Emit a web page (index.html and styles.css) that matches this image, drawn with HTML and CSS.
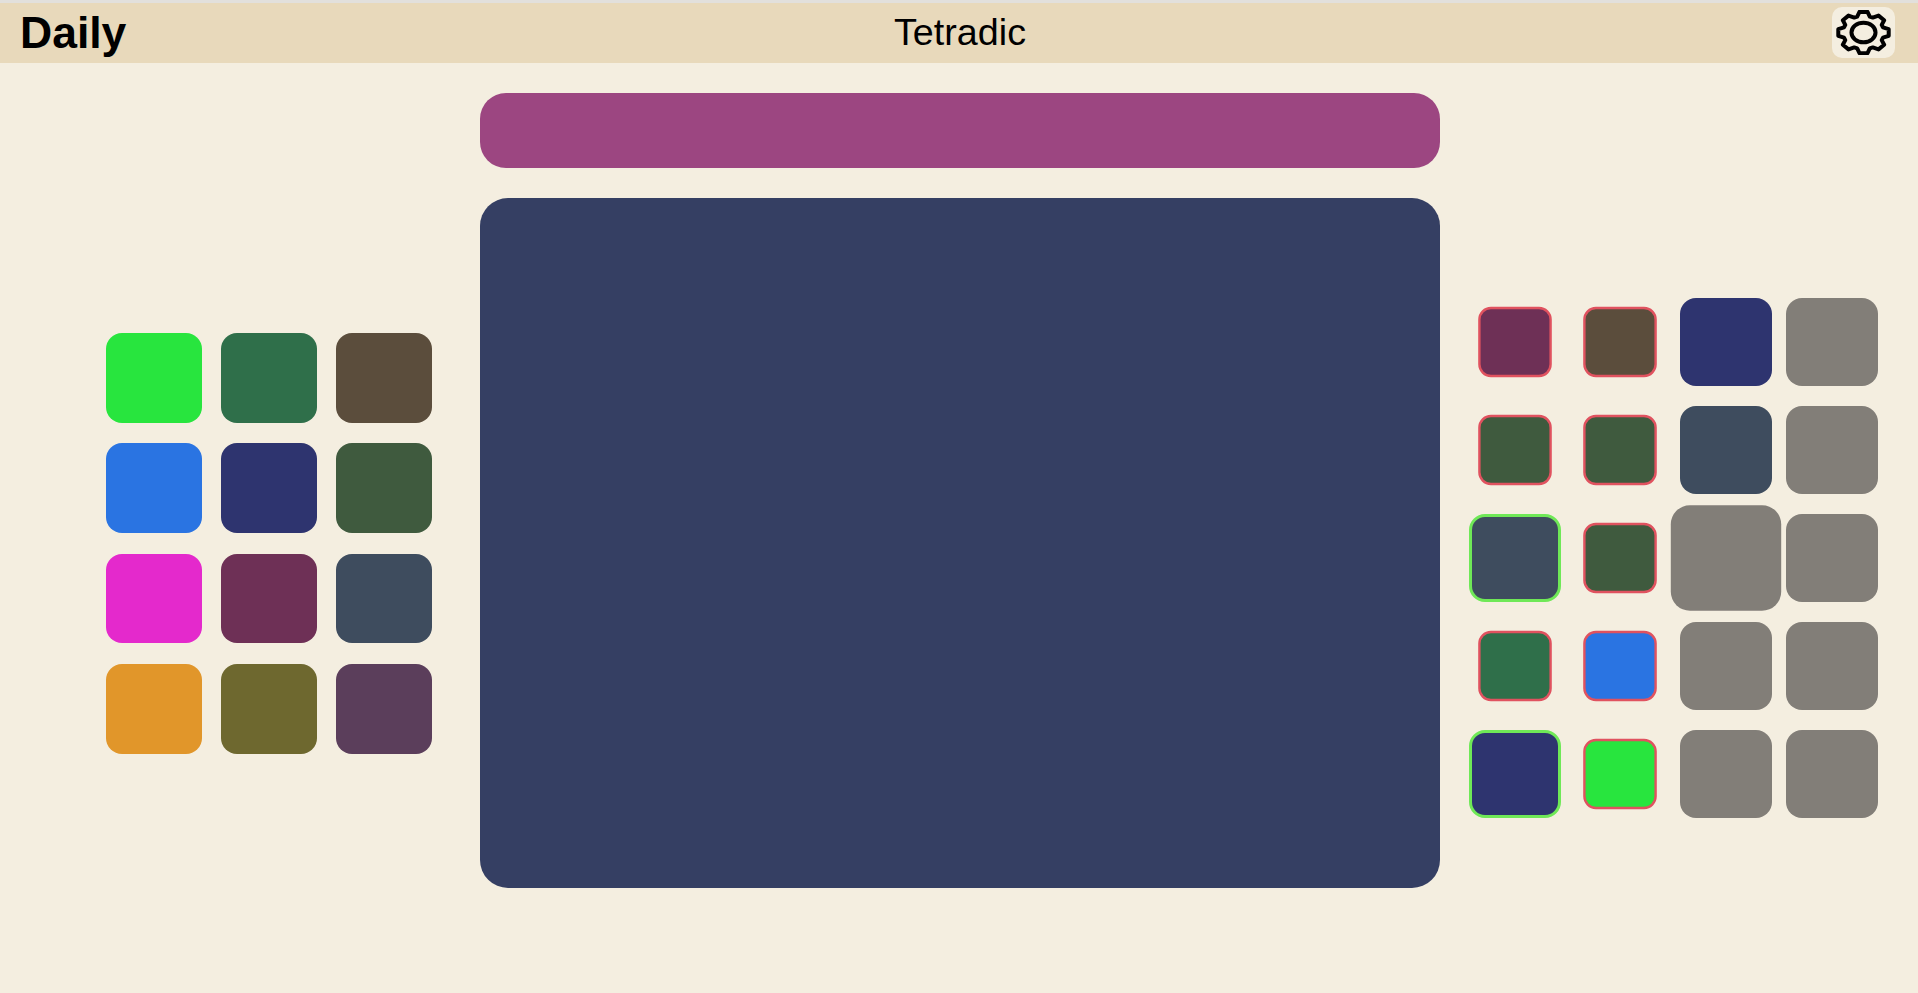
FILE: index.html
```html
<!DOCTYPE html>
<html lang="en">
<head>
<meta charset="utf-8">
<title>Daily - Tetradic</title>
<link rel="stylesheet" href="styles.css">
</head>
<body>
<header class="topbar">
  <h1 class="brand">Daily</h1>
  <div class="mode">Tetradic</div>
  <button class="gear" aria-label="Settings">
    <svg class="gear-icon" viewBox="0 0 48 48" preserveAspectRatio="none">
      <path vector-effect="non-scaling-stroke" d="M18.5 7L20.5 2H27.5L29.5 7L32.13 8.09L37.08 5.97L42.03 10.92L39.91 15.87L41 18.5L46 20.5V27.5L41 29.5L39.91 32.13L42.03 37.08L37.08 42.03L32.13 39.91L29.5 41L27.5 46H20.5L18.5 41L15.87 39.91L10.92 42.03L5.97 37.08L8.09 32.13L7 29.5L2 27.5V20.5L7 18.5L8.09 15.87L5.97 10.92L10.92 5.97L15.87 8.09Z"/>
      <circle vector-effect="non-scaling-stroke" cx="24" cy="24" r="10.5"/>
    </svg>
  </button>
</header>
<main class="stage">
  <section class="palette">
    <div class="sw c-green"></div><div class="sw c-forest2"></div><div class="sw c-brown"></div>
    <div class="sw c-blue"></div><div class="sw c-navy"></div><div class="sw c-forest"></div>
    <div class="sw c-magenta"></div><div class="sw c-plum"></div><div class="sw c-slate"></div>
    <div class="sw c-orange"></div><div class="sw c-olive"></div><div class="sw c-mauve"></div>
  </section>
  <section class="center">
    <div class="target"></div>
    <div class="canvas"></div>
  </section>
  <section class="board">
    <div class="cell c-plum wrong"></div><div class="cell c-brown wrong"></div><div class="cell c-navy"></div><div class="cell c-gray"></div>
    <div class="cell c-forest wrong"></div><div class="cell c-forest wrong"></div><div class="cell c-slate"></div><div class="cell c-gray"></div>
    <div class="cell c-slate right"></div><div class="cell c-forest wrong"></div><div class="cell c-gray active"></div><div class="cell c-gray"></div>
    <div class="cell c-forest2 wrong"></div><div class="cell c-blue wrong"></div><div class="cell c-gray"></div><div class="cell c-gray"></div>
    <div class="cell c-navy right"></div><div class="cell c-green wrong"></div><div class="cell c-gray"></div><div class="cell c-gray"></div>
  </section>
</main>
</body>
</html>
```
FILE: styles.css
```css
* { box-sizing: border-box; }
html { background: #f4eee0; }
body {
  margin: 0;
  font-family: "Liberation Sans", Arial, sans-serif;
  color: #000;
}
.topbar {
  height: 63px;
  border-top: 3px solid #e2e0dc;
  background: #e8d9bb;
  display: grid;
  grid-template-columns: 1fr auto 1fr;
  align-items: center;
  padding: 0 20px;
}
.brand { margin: 0; font-size: 44.5px; line-height: 1; font-weight: 700; }
.mode { font-size: 37.7px; line-height: 1; padding-left: 2px; }
.gear {
  justify-self: end;
  width: 63px;
  height: 51px;
  margin: -1px 3px 0 0;
  padding: 0;
  border: 0;
  border-radius: 10px;
  background: #f4eee0;
  display: flex;
  align-items: center;
  justify-content: center;
}
.gear-icon {
  display: block;
  width: 55px;
  height: 45px;
  fill: none;
  stroke: #000;
  stroke-width: 4px;
  stroke-linejoin: round;
}
.stage {
  display: grid;
  grid-template-columns: 480px 960px 478px;
  height: 930px;
}
.palette {
  display: grid;
  grid-template-columns: repeat(3, 96px);
  grid-auto-rows: 89.6px;
  gap: 20.8px 19px;
  padding: 270px 0 0 106px;
}
.center {
  display: flex;
  flex-direction: column;
  gap: 30px;
  padding-top: 30px;
}
.target { height: 75px; border-radius: 26px; background: #9c4681; }
.canvas { height: 690px; border-radius: 28px; background: #353f63; }
.sw, .cell { border-radius: 16px; }
.board {
  display: grid;
  grid-template-columns: repeat(4, 92px);
  grid-auto-rows: 87.7px;
  gap: 20.3px 13.6px;
  padding: 235.4px 0 0 28.8px;
}
.wrong { border: 3px solid #e0525f; transform: scale(.8); }
.right { border: 3px solid #6fe857; }
.active { transform: scale(1.2); }
.c-green { background: #28e53e; }
.c-forest2 { background: #2f6f4a; }
.c-brown { background: #5b4d3c; }
.c-blue { background: #2a74e2; }
.c-navy { background: #2e346f; }
.c-forest { background: #3f5a3e; }
.c-magenta { background: #e429cc; }
.c-plum { background: #6e3056; }
.c-slate { background: #3e4c5e; }
.c-orange { background: #e1962a; }
.c-olive { background: #6e682f; }
.c-mauve { background: #5b3e5b; }
.c-gray { background: #827e78; }
```
